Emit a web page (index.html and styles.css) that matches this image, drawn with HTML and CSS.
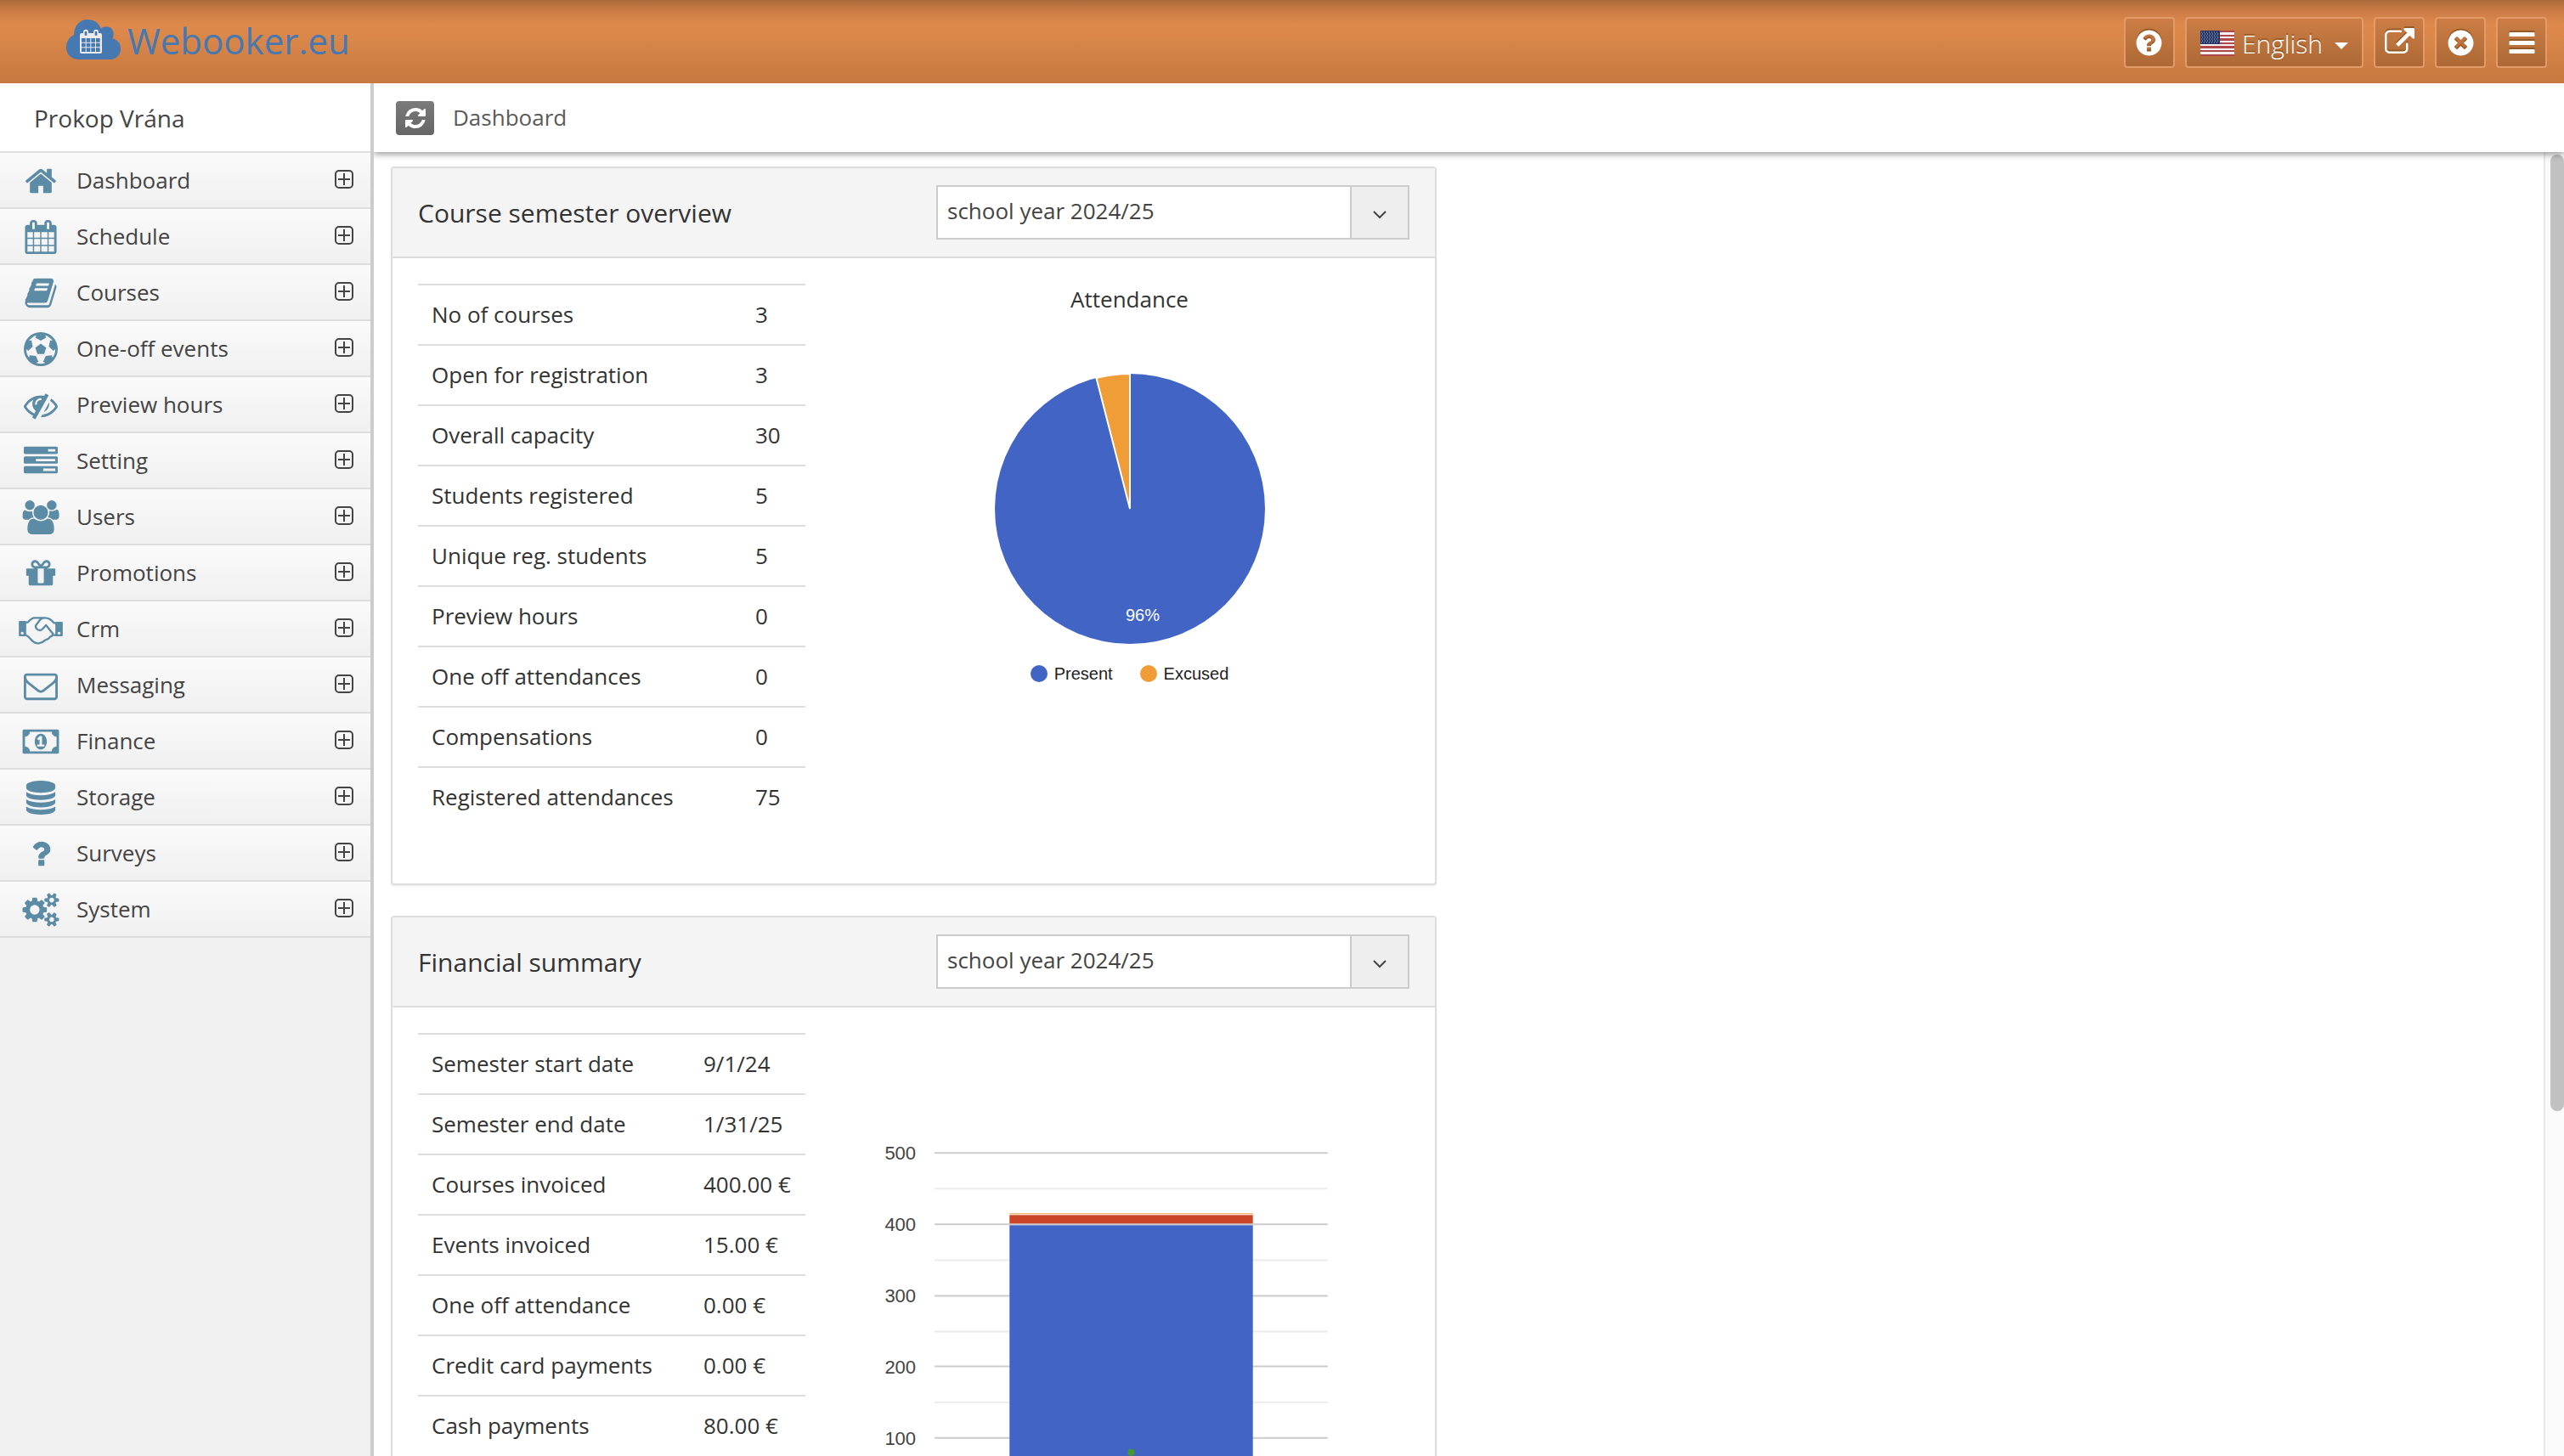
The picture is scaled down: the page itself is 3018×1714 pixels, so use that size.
FILE: index.html
```html
<!DOCTYPE html>
<html lang="en">
<head>
<meta charset="utf-8">
<title>Webooker.eu - Dashboard</title>
<link rel="stylesheet" href="styles.css">
</head>
<body>
<svg class="sprite" aria-hidden="true">
  <symbol id="plus" viewBox="0 0 22 22"><rect x="1" y="1" width="20" height="20" rx="4" fill="none" stroke="currentColor" stroke-width="2"/><path d="M4 11h14M11 4v14" stroke="currentColor" stroke-width="2"/></symbol>
</svg>
<header class="topbar">
  <a class="brand" href="#">
    <svg class="brand-logo" viewBox="24 24 192 141" aria-hidden="true">
      <path fill="#4678b1" d="M68 165C42 165 24 147 24 122C24 102 35 86 51 79C51 47 71 24 99 24C123 24 141 38 146 56C152 51 158 49 167 49C181 49 191 60 191 75C191 82 190 87 186 91C204 94 216 108 216 127C216 149 201 165 178 165Z"/>
      <path fill="#ebebeb" d="M78 72h6v-4a9 9 0 0 1 18 0v4h18v-4a9 9 0 0 1 18 0v4h6q6 0 6 6v60q0 6-6 6H78q-6 0-6-6V78q0-6 6-6z"/>
      <path fill="#4678b1" d="M89 69a4 4 0 0 1 8 0v11h-8zM125 69a4 4 0 0 1 8 0v11h-8zM78 90h14v14H78zM95 90h14v14H95zM112 90h14v14h-14zM129 90h14v14h-14zM78 107h14v14H78zM95 107h14v14H95zM112 107h14v14h-14zM129 107h14v14h-14zM78 124h14v14H78zM95 124h14v14H95zM112 124h14v14h-14zM129 124h14v14h-14z"/>
    </svg>
    <span>Webooker.eu</span>
  </a>
  <div class="tools">
    <button class="tool" type="button" aria-label="Help"><svg viewBox="0 0 1792 1792"><path d="M1024 1376v-192q0-14-9-23t-23-9h-192q-14 0-23 9t-9 23v192q0 14 9 23t23 9h192q14 0 23-9t9-23zm256-672q0-88-55.500-163t-138.500-116-170-41q-243 0-371 213-15 24 8 42l132 100q7 6 19 6 16 0 25-12 53-68 86-92 34-24 86-24 48 0 85.500 26t37.500 59q0 38-20 61t-68 45q-63 28-115.500 86.500t-52.500 125.500v36q0 14 9 23t23 9h192q14 0 23-9t9-23q0-19 21.500-49.500t54.500-49.500q32-18 49-28.500t46-35 44.500-48 28-60.500 12.500-81zm384 192q0 209-103 385.500t-279.500 279.500-385.500 103-385.500-103-279.500-279.500-103-385.500 103-385.500 279.500-279.500 385.500-103 385.500 103 279.500 279.500 103 385.500z"/></svg></button>
    <button class="tool language" type="button">
      <svg class="flag" viewBox="0 0 40 30" aria-hidden="true">
        <rect width="40" height="30" fill="#f4f1f0"/>
        <path fill="#b2474b" d="M0 0h40v2H0zM0 5h40v2H0zM0 9h40v3H0zM0 14h40v2H0zM0 18h40v3H0zM0 23h40v2H0zM0 28h40v2H0z"/>
        <rect width="23" height="16" fill="#263767"/>
        <path stroke="#a9b6cf" stroke-width="1" stroke-dasharray="1 2" d="M1 2h21M2 4h20M1 6h21M2 8h20M1 10h21M2 12h20M1 14h21"/>
      </svg>
      <span>English</span>
      <svg class="caret" viewBox="0 0 16 8" aria-hidden="true"><path d="M0 0h16l-8 8z"/></svg>
    </button>
    <button class="tool" type="button" aria-label="Open in new window"><svg viewBox="0 0 1792 1792"><path d="M1408 928v320q0 119-84.500 203.500t-203.500 84.500h-832q-119 0-203.500-84.500t-84.500-203.500v-832q0-119 84.500-203.500t203.500-84.500h704q14 0 23 9t9 23v64q0 14-9 23t-23 9h-704q-66 0-113 47t-47 113v832q0 66 47 113t113 47h832q66 0 113-47t47-113v-320q0-14 9-23t23-9h64q14 0 23 9t9 23zm384-864v512q0 26-19 45t-45 19-45-19l-176-176-652 652q-10 10-23 10t-23-10l-114-114q-10-10-10-23t10-23l652-652-176-176q-19-19-19-45t19-45 45-19h512q26 0 45 19t19 45z"/></svg></button>
    <button class="tool" type="button" aria-label="Close"><svg viewBox="0 0 1792 1792"><path d="M1277 1122q0-26-19-45l-181-181 181-181q19-19 19-45 0-27-19-46l-90-90q-19-19-46-19-26 0-45 19l-181 181-181-181q-19-19-45-19-27 0-46 19l-90 90q-19 19-19 46 0 26 19 45l181 181-181 181q-19 19-19 45 0 27 19 46l90 90q19 19 46 19 26 0 45-19l181-181 181 181q19 19 45 19 27 0 46-19l90-90q19-19 19-46zm387-226q0 209-103 385.500t-279.500 279.500-385.500 103-385.500-103-279.500-279.500-103-385.500 103-385.500 279.500-279.500 385.500-103 385.500 103 279.500 279.500 103 385.500z"/></svg></button>
    <button class="tool" type="button" aria-label="Menu"><svg viewBox="0 0 1792 1792"><path d="M1664 1344v128q0 26-19 45t-45 19h-1408q-26 0-45-19t-19-45v-128q0-26 19-45t45-19h1408q26 0 45 19t19 45zm0-512v128q0 26-19 45t-45 19h-1408q-26 0-45-19t-19-45v-128q0-26 19-45t45-19h1408q26 0 45 19t19 45zm0-512v128q0 26-19 45t-45 19h-1408q-26 0-45-19t-19-45v-128q0-26 19-45t45-19h1408q26 0 45 19t19 45z"/></svg></button>
  </div>
</header>
<div class="shell">
  <aside class="sidebar">
    <div class="user">Prokop Vrána</div>
    <nav class="menu" aria-label="Main">
      <a href="#"><svg class="icon" viewBox="0 0 1792 1792"><path d="M1472 992v480q0 26-19 45t-45 19h-384v-384h-256v384h-384q-26 0-45-19t-19-45v-480q0-1 .5-3t.5-3l575-474 575 474q1 2 1 6zm223-69l-62 74q-8 9-21 11h-3q-13 0-21-7l-692-577-692 577q-12 8-24 7-13-2-21-11l-62-74q-8-10-7-23.500t11-21.500l719-599q32-26 76-26t76 26l244 204v-195q0-14 9-23t23-9h192q14 0 23 9t9 23v408l219 182q10 8 11 21.500t-7 23.500z"/></svg><span>Dashboard</span><svg class="plus"><use href="#plus"/></svg></a>
      <a href="#"><svg class="icon" viewBox="0 0 1792 1792"><path d="M192 1664h288v-288h-288v288zm352 0h320v-288h-320v288zm-352-352h288v-320h-288v320zm352 0h320v-320h-320v320zm-352-384h288v-288h-288v288zm736 736h320v-288h-320v288zm-384-736h320v-288h-320v288zm768 736h288v-288h-288v288zm-384-352h320v-320h-320v320zm-352-864v-288q0-13-9.500-22.500t-22.500-9.500h-64q-13 0-22.500 9.500t-9.500 22.500v288q0 13 9.500 22.500t22.500 9.500h64q13 0 22.500-9.500t9.500-22.500zm736 864h288v-320h-288v320zm-384-384h320v-288h-320v288zm384 0h288v-288h-288v288zm32-480v-288q0-13-9.500-22.500t-22.500-9.500h-64q-13 0-22.500 9.500t-9.500 22.500v288q0 13 9.500 22.500t22.500 9.500h64q13 0 22.500-9.500t9.500-22.500zm384-64v1280q0 52-38 90t-90 38h-1408q-52 0-90-38t-38-90v-1280q0-52 38-90t90-38h128v-96q0-66 47-113t113-47h64q66 0 113 47t47 113v96h384v-96q0-66 47-113t113-47h64q66 0 113 47t47 113v96h128q52 0 90 38t38 90z"/></svg><span>Schedule</span><svg class="plus"><use href="#plus"/></svg></a>
      <a href="#"><svg class="icon" viewBox="0 0 1792 1792"><path d="M1703 478q40 57 18 129l-275 906q-19 64-76.500 107.500t-122.500 43.500h-923q-77 0-148.500-53.500t-99.500-131.500q-24-67-2-127 0-4 3-27t4-37q1-8-3-21.500t-3-19.500q2-11 8-21t16.500-23.500 16.500-23.500q23-38 45-91.500t30-91.500q3-10 .5-30t-.5-28q3-11 17-28t17-23q21-36 42-92t25-90q1-9-2.500-32t.5-28q4-13 22-30.500t22-22.500q19-26 42.500-84.500t27.500-96.500q1-8-3-25.500t-2-26.500q2-8 9-18t18-23 17-21q8-12 16.500-30.500t15-35 16-36 19.500-32 26.500-23.500 36-11.500 47.500 5.500l-1 3q38-9 51-9h761q74 0 114 56t18 130l-274 906q-36 119-71.500 153.500t-128.500 34.500h-869q-27 0-38 15-11 16-1 43 24 70 144 70h923q29 0 56-15.500t35-41.500l300-987q7-22 5-57 38 15 59 43zm-1064 2q-4 13 2 22.500t20 9.500h608q13 0 25.500-9.500t16.500-22.500l21-64q4-13-2-22.500t-20-9.500h-608q-13 0-25.500 9.500t-16.500 22.500zm-83 256q-4 13 2 22.500t20 9.500h608q13 0 25.500-9.500t16.500-22.500l21-64q4-13-2-22.500t-20-9.500h-608q-13 0-25.500 9.500t-16.500 22.500z"/></svg><span>Courses</span><svg class="plus"><use href="#plus"/></svg></a>
      <a href="#"><svg class="icon" viewBox="0 0 1792 1792"><path d="M609 816l287-208 287 208-109 336h-355zm287-816q182 0 348 71t286 191 191 286 71 348-71 348-191 286-286 191-348 71-348-71-286-191-191-286-71-348 71-348 191-286 286-191 348-71zm619 1350q149-203 149-454v-3l-102 89-240-224 63-323 134 12q-150-206-389-282l53 124-287 159-287-159 53-124q-239 76-389 282l135-12 62 323-240 224-102-89v3q0 251 149 454l30-132 326 40 139 298-116 69q117 39 240 39t240-39l-116-69 139-298 326-40z"/></svg><span>One-off events</span><svg class="plus"><use href="#plus"/></svg></a>
      <a href="#"><svg class="icon" viewBox="0 0 1792 1792"><path d="M555 1335l78-141q-87-63-136-159t-49-203q0-121 61-225-229 117-381 353 167 258 427 375zm389-759q0-20-14-34t-34-14q-125 0-214.500 89.500t-89.500 214.500q0 20 14 34t34 14 34-14 14-34q0-86 61-147t147-61q20 0 34-14t14-34zm363-191q0 7-1 9-106 189-316 567t-315 566l-49 89q-10 16-28 16-12 0-134-70-16-10-16-28 0-12 44-87-143-65-263.500-173t-208.500-245q-20-31-20-69t20-69q153-235 380-371t496-136q89 0 180 17l54-97q10-16 28-16 5 0 18 6t31 15.500 33 18.500 31.500 18.500 19.500 11.500q16 10 16 27zm37 447q0 139-79 253.500t-209 164.500l280-502q8 45 8 84zm448 128q0 35-20 69-39 64-109 145-150 172-347.500 267t-419.500 95l74-132q212-18 392.500-137t301.500-307q-115-179-282-294l63-112q95 64 182.500 153t144.500 184q20 34 20 69z"/></svg><span>Preview hours</span><svg class="plus"><use href="#plus"/></svg></a>
      <a href="#"><svg class="icon" viewBox="0 0 1792 1792"><path d="M1024 1408h640v-128h-640v128zm-384-512h1024v-128h-1024v128zm640-512h384v-128h-384v128zm512 832v256q0 26-19 45t-45 19h-1664q-26 0-45-19t-19-45v-256q0-26 19-45t45-19h1664q26 0 45 19t19 45zm0-512v256q0 26-19 45t-45 19h-1664q-26 0-45-19t-19-45v-256q0-26 19-45t45-19h1664q26 0 45 19t19 45zm0-512v256q0 26-19 45t-45 19h-1664q-26 0-45-19t-19-45v-256q0-26 19-45t45-19h1664q26 0 45 19t19 45z"/></svg><span>Setting</span><svg class="plus"><use href="#plus"/></svg></a>
      <a href="#"><svg class="icon" viewBox="64 0 1920 1792"><path d="M657 896q-162 5-265 128h-134q-82 0-138-40.500t-56-118.500q0-353 124-353 6 0 43.500 21t97.500 42.500 119 21.500q67 0 133-23-5 37-5 66 0 159 93 287zm1071 637q0 120-73 189.500t-194 69.500h-874q-121 0-194-69.500t-73-189.500q0-53 3.500-103.500t14-109 26.500-108.500 43-97.500 62-81 85.500-53.500 111.500-20q10 0 43 21.500t73 48 107 48 135 21.500 135-21.500 107-48 73-48 43-21.500q61 0 111.500 20t85.500 53.500 62 81 43 97.500 26.500 108.500 14 109 3.500 103.500zm-1024-1277q0 106-75 181t-181 75-181-75-75-181 75-181 181-75 181 75 75 181zm704 384q0 159-112.500 271.500t-271.500 112.500-271.500-112.500-112.500-271.500 112.500-271.500 271.500-112.500 271.500 112.500 112.500 271.500zm576 225q0 78-56 118.500t-138 40.500h-134q-103-123-265-128 93-128 93-287 0-29-5-66 66 23 133 23 59 0 119-21.500t97.500-42.500 43.500-21q124 0 124 353zm-128-609q0 106-75 181t-181 75-181-75-75-181 75-181 181-75 181 75 75 181z"/></svg><span>Users</span><svg class="plus"><use href="#plus"/></svg></a>
      <a href="#"><svg class="icon" viewBox="0 0 1792 1792"><path d="M1056 1356v-716h-320v716q0 25 18 38.500t46 13.500h192q28 0 46-13.500t18-38.500zm-456-844h195l-126-161q-26-31-69-31-40 0-68 28t-28 68 28 68 68 28zm688-96q0-40-28-68t-68-28q-43 0-69 31l-125 161h194q40 0 68-28t28-68zm376 256v320q0 14-9 23t-23 9h-96v416q0 40-28 68t-68 28h-1088q-40 0-68-28t-28-68v-416h-96q-14 0-23-9t-9-23v-320q0-14 9-23t23-9h440q-93 0-158.500-65.500t-65.500-158.500 65.500-158.500 158.500-65.500q107 0 168 77l128 165 128-165q61-77 168-77 93 0 158.500 65.500t65.500 158.500-65.500 158.500-158.500 65.500h440q14 0 23 9t9 23z"/></svg><span>Promotions</span><svg class="plus"><use href="#plus"/></svg></a>
      <a href="#"><svg class="icon" viewBox="66 693 155 120"><path fill-rule="evenodd" d="M66 726q0-3 3-3h23v54H69q-3 0-3-3zM78 761a5 5 0 1 0 .1 0zM221 729q0-3-3-3h-23v51h23q3 0 3-3zM208 761a5 5 0 1 0 .1 0z"/><path fill="none" stroke="currentColor" stroke-width="7" stroke-linejoin="round" d="M90 728h8C104 720 110 712 122 712h38C172 712 182 720 190 730h8M90 773C98 774 106 786 114 794C122 801 128 803 136 802C146 800 154 796 160 790C168 788 174 784 176 779C182 778 186 774 187 769L162 738L150 751C145 758 134 757 129 751C124 745 124 741 128 736L142 718Q147 712 156 712M186 773h12"/></svg><span>Crm</span><svg class="plus"><use href="#plus"/></svg></a>
      <a href="#"><svg class="icon" viewBox="0 0 1792 1792"><path d="M1664 1504v-768q-32 36-69 66-268 206-426 338-51 43-83 67t-86.500 48.500-102.500 24.500h-2q-48 0-102.500-24.500t-86.500-48.500-83-67q-158-132-426-338-37-30-69-66v768q0 13 9.500 22.500t22.500 9.500h1472q13 0 22.500-9.500t9.500-22.500zm0-1051v-24.500l-.5-13-3-12.500-5.500-9-9-7.500-14-2.500h-1472q-13 0-22.500 9.500t-9.500 22.500q0 168 147 284 193 152 401 317 6 5 35 29.500t46 37.500 44.500 31.500 50.500 27.500 43 9h2q20 0 43-9t50.500-27.500 44.500-31.500 46-37.500 35-29.500q208-165 401-317 54-43 100.500-115.500t46.500-131.500zm128-37v1088q0 66-47 113t-113 47h-1472q-66 0-113-47t-47-113v-1088q0-66 47-113t113-47h1472q66 0 113 47t47 113z"/></svg><span>Messaging</span><svg class="plus"><use href="#plus"/></svg></a>
      <a href="#"><svg class="icon" viewBox="0 0 1920 1792"><path d="M768 1152h384v-96h-128v-448h-114l-148 137 77 80q42-37 55-57h2v288h-128v96zm512-256q0 70-21 142t-59.500 134-101.500 101-138 39-138-39-101.500-101-59.500-134-21-142 21-142 59.500-134 101.500-101 138-39 138 39 101.500 101 59.500 134 21 142zm512 256v-512q-106 0-181-75t-75-181h-1152q0 106-75 181t-181 75v512q106 0 181 75t75 181h1152q0-106 75-181t181-75zm128-832v1152q0 26-19 45t-45 19h-1792q-26 0-45-19t-19-45v-1152q0-26 19-45t45-19h1792q26 0 45 19t19 45z"/></svg><span>Finance</span><svg class="plus"><use href="#plus"/></svg></a>
      <a href="#"><svg class="icon" viewBox="0 0 1792 1792"><path d="M896 768q237 0 443-43t325-127v170q0 69-103 128t-280 93.500-385 34.500-385-34.500-280-93.500-103-128v-170q119 84 325 127t443 43zm0 768q237 0 443-43t325-127v170q0 69-103 128t-280 93.500-385 34.500-385-34.500-280-93.500-103-128v-170q119 84 325 127t443 43zm0-384q237 0 443-43t325-127v170q0 69-103 128t-280 93.500-385 34.500-385-34.500-280-93.500-103-128v-170q119 84 325 127t443 43zm0-1152q208 0 385 34.500t280 93.500 103 128v128q0 69-103 128t-280 93.500-385 34.500-385-34.500-280-93.500-103-128v-128q0-69 103-128t280-93.500 385-34.500z"/></svg><span>Storage</span><svg class="plus"><use href="#plus"/></svg></a>
      <a href="#"><svg class="icon" viewBox="0 0 1792 1792"><path d="M1088 1256v240q0 16-12 28t-28 12h-240q-16 0-28-12t-12-28v-240q0-16 12-28t28-12h240q16 0 28 12t12 28zm316-600q0 54-15.500 101t-35 76.500-55 59.500-57.500 43.500-61 35.500q-41 23-68.500 65t-27.500 67q0 17-12 32.500t-28 15.500h-240q-15 0-25.500-18.500t-10.500-37.500v-45q0-83 65-156.500t143-108.500q59-27 84-56t25-76q0-42-46.500-74t-107.500-32q-65 0-108 29-35 25-107 115-13 16-31 16-12 0-25-8l-164-125q-13-10-15.500-25t5.500-28q160-266 464-266 80 0 161 31t146 83 106 127.500 41 158.500z"/></svg><span>Surveys</span><svg class="plus"><use href="#plus"/></svg></a>
      <a href="#"><svg class="icon" viewBox="-64 0 1920 1792"><path d="M832 896q0-106-75-181t-181-75-181 75-75 181 75 181 181 75 181-75 75-181zm768 512q0-52-38-90t-90-38-90 38-38 90q0 53 37.500 90.500t90.500 37.500 90.500-37.500 37.500-90.500zm0-1024q0-52-38-90t-90-38-90 38-38 90q0 53 37.500 90.500t90.500 37.500 90.500-37.500 37.500-90.500zm-384 421v185q0 10-7 19.500t-16 10.500l-155 24q-11 35-32 76 34 48 90 115 7 11 7 20 0 12-7 19-23 30-82.500 89.500t-78.500 59.500q-11 0-21-7l-115-90q-37 19-77 31-11 108-23 155-7 24-30 24h-186q-11 0-20-7.500t-10-17.500l-23-153q-34-10-75-31l-118 89q-7 7-20 7-11 0-21-8-144-133-144-160 0-9 7-19 10-14 41-53t47-61q-23-44-35-82l-152-24q-10-1-17-9.500t-7-19.500v-185q0-10 7-19.500t16-10.500l155-24q11-35 32-76-34-48-90-115-7-11-7-20 0-12 7-20 22-30 82-89t79-59q11 0 21 7l115 90q34-18 77-32 11-108 23-154 7-24 30-24h186q11 0 20 7.500t10 17.500l23 153q34 10 75 31l118-89q8-7 20-7 11 0 21 8 144 133 144 160 0 8-7 19-12 16-42 54t-45 60q23 48 34 82l152 23q10 2 17 10.500t7 19.500zm640 533v140q0 16-149 31-12 27-30 52 51 113 51 138 0 4-4 7-122 71-124 71-8 0-46-47t-52-68q-20 2-30 2t-30-2q-14 21-52 68t-46 47q-2 0-124-71-4-3-4-7 0-25 51-138-18-25-30-52-149-15-149-31v-140q0-16 149-31 13-29 30-52-51-113-51-138 0-4 4-7 4-2 35-20t59-34 30-16q8 0 46 46.500t52 67.500q20-2 30-2t30 2q51-71 92-112l6-2q4 0 124 70 4 3 4 7 0 25-51 138 17 23 30 52 149 15 149 31zm0-1024v140q0 16-149 31-12 27-30 52 51 113 51 138 0 4-4 7-122 71-124 71-8 0-46-47t-52-68q-20 2-30 2t-30-2q-14 21-52 68t-46 47q-2 0-124-71-4-3-4-7 0-25 51-138-18-25-30-52-149-15-149-31v-140q0-16 149-31 13-29 30-52-51-113-51-138 0-4 4-7 4-2 35-20t59-34 30-16q8 0 46 46.500t52 67.500q20-2 30-2t30 2q51-71 92-112l6-2q4 0 124 70 4 3 4 7 0 25-51 138 17 23 30 52 149 15 149 31z"/></svg><span>System</span><svg class="plus"><use href="#plus"/></svg></a>
    </nav>
  </aside>
  <main class="main">
    <div class="pagebar">
      <button class="refresh" type="button" aria-label="Refresh"><svg viewBox="0 0 1792 1792"><path d="M1639 1056q0 5-1 7-64 268-268 434.500t-478 166.500q-146 0-282.500-55t-243.500-157l-129 129q-19 19-45 19t-45-19-19-45v-448q0-26 19-45t45-19h448q26 0 45 19t19 45-19 45l-137 137q71 66 161 102t187 36q134 0 250-65t186-179q11-17 53-117 8-23 30-23h192q13 0 22.500 9.500t9.500 22.500zm25-800v448q0 26-19 45t-45 19h-448q-26 0-45-19t-19-45 19-45l138-138q-148-137-349-137-134 0-250 65t-186 179q-11 17-53 117-8 23-30 23h-199q-13 0-22.500-9.500t-9.500-22.500v-7q65-268 270-434.500t480-166.500q146 0 284 55.500t245 156.500l130-129q19-19 45-19t45 19 19 45z"/></svg></button>
      <h1>Dashboard</h1>
    </div>
    <div class="viewport">
      <div class="content">
        <div class="column">
          <section class="panel">
            <div class="panel-head">
              <h2>Course semester overview</h2>
              <div class="combo">
                <select aria-label="Course semester"><option>school year 2024/25</option></select>
                <span class="combo-arrow"><svg viewBox="0 0 16 10" aria-hidden="true"><path d="M1 1l7 7 7-7"/></svg></span>
              </div>
            </div>
            <div class="panel-body">
              <table class="stats">
                <tbody>
                  <tr><th scope="row">No of courses</th><td>3</td></tr>
                  <tr><th scope="row">Open for registration</th><td>3</td></tr>
                  <tr><th scope="row">Overall capacity</th><td>30</td></tr>
                  <tr><th scope="row">Students registered</th><td>5</td></tr>
                  <tr><th scope="row">Unique reg. students</th><td>5</td></tr>
                  <tr><th scope="row">Preview hours</th><td>0</td></tr>
                  <tr><th scope="row">One off attendances</th><td>0</td></tr>
                  <tr><th scope="row">Compensations</th><td>0</td></tr>
                  <tr><th scope="row">Registered attendances</th><td>75</td></tr>
                </tbody>
              </table>
              <figure class="chart">
                <figcaption>Attendance</figcaption>
                <svg class="pie" viewBox="0 0 320 320" role="img" aria-label="Attendance pie chart">
                  <circle cx="160" cy="160" r="159" fill="#4265c5"/>
                  <path fill="#f09d38" stroke="#fff" stroke-width="2" d="M160 160L120.500 6A159 159 0 0 1 160 1z"/>
                  <text x="175" y="292" text-anchor="middle" fill="#fff">96%</text>
                </svg>
                <ul class="legend">
                  <li class="present">Present</li>
                  <li class="excused">Excused</li>
                </ul>
              </figure>
            </div>
          </section>
          <section class="panel">
            <div class="panel-head">
              <h2>Financial summary</h2>
              <div class="combo">
                <select aria-label="Financial period"><option>school year 2024/25</option></select>
                <span class="combo-arrow"><svg viewBox="0 0 16 10" aria-hidden="true"><path d="M1 1l7 7 7-7"/></svg></span>
              </div>
            </div>
            <div class="panel-body">
              <table class="stats money">
                <tbody>
                  <tr><th scope="row">Semester start date</th><td>9/1/24</td></tr>
                  <tr><th scope="row">Semester end date</th><td>1/31/25</td></tr>
                  <tr><th scope="row">Courses invoiced</th><td>400.00 €</td></tr>
                  <tr><th scope="row">Events invoiced</th><td>15.00 €</td></tr>
                  <tr><th scope="row">One off attendance</th><td>0.00 €</td></tr>
                  <tr><th scope="row">Credit card payments</th><td>0.00 €</td></tr>
                  <tr><th scope="row">Cash payments</th><td>80.00 €</td></tr>
                </tbody>
              </table>
              <figure class="chart">
                <svg class="bars" viewBox="0 1 658 640" role="img" aria-label="Financial bar chart">
                  <path stroke="#ebebeb" stroke-width="2" d="M100 184h462M100 268h462M100 352h462M100 435h462M100 519h462"/>
                  <path stroke="#ccc" stroke-width="2" d="M100 142h462M100 226h462M100 310h462M100 393h462M100 477h462M100 560h462"/>
                  <rect x="188" y="213" width="286" height="1" fill="#f09d38"/>
                  <rect x="188" y="215" width="286" height="10" fill="#cb4628"/>
                  <rect x="188" y="227" width="286" height="333" fill="#4265c5"/>
                  <circle cx="331" cy="494" r="4" fill="#449a2b"/>
                  <g text-anchor="end" fill="#444">
                    <text x="78" y="150">500</text>
                    <text x="78" y="234">400</text>
                    <text x="78" y="318">300</text>
                    <text x="78" y="401">200</text>
                    <text x="78" y="485">100</text>
                  </g>
                </svg>
              </figure>
            </div>
          </section>
        </div>
      </div>
      <div class="scrollbar"><div class="thumb"></div></div>
    </div>
  </main>
</div>
</body>
</html>
```
FILE: styles.css
```css
* {
  box-sizing: border-box;
}

body {
  margin: 0;
  height: 100vh;
  overflow: hidden;
  display: flex;
  flex-direction: column;
  background: #fff;
  color: #333;
  font: 26px/37px "Open Sans", "Noto Sans", sans-serif;
}

.sprite {
  display: none;
}

button {
  font: inherit;
}

/* Top bar */
.topbar {
  flex: none;
  display: flex;
  justify-content: space-between;
  align-items: center;
  height: 98px;
  padding: 2px 20px 0 78px;
  background: linear-gradient(#aa693a, #cd7d46 14px, #df8a4c 30px, #c67840);
}

.brand {
  display: flex;
  align-items: center;
  gap: 8px;
  padding-bottom: 4px;
  color: #4678b1;
  font-size: 42px;
  line-height: 60px;
  text-decoration: none;
}

.brand-logo {
  width: 64px;
  height: 47px;
  margin-bottom: 4px;
}

.tools {
  display: flex;
  gap: 12px;
}

.tool {
  display: flex;
  align-items: center;
  justify-content: center;
  width: 60px;
  height: 60px;
  padding: 0;
  border: 2px solid #e29a66;
  border-radius: 4px;
  background: linear-gradient(#cc7d45, #ad6936);
  color: #fff;
  text-shadow: 0 -2px 0 #965a25;
}

.tool svg {
  width: 35px;
  height: 35px;
  fill: currentColor;
  filter: drop-shadow(0 -2px 0 #965a25);
}

.tool.language {
  justify-content: flex-start;
  width: auto;
  padding: 2px 16px 0;
  font-size: 30px;
  font-weight: 300;
}

.tool .flag {
  width: 40px;
  height: 30px;
  margin-right: 9px;
  filter: none;
}

.tool .caret {
  width: 16px;
  height: 8px;
  margin: 6px 0 0 14px;
  filter: none;
}

/* Shell */
.shell {
  flex: 1;
  min-height: 0;
  display: flex;
}

.sidebar {
  flex: none;
  width: 440px;
  border-right: 4px solid #ccc;
  background: #f1f1f1;
}

.user {
  height: 82px;
  padding-left: 40px;
  border-bottom: 2px solid #e0e0e0;
  background: #fff;
  color: #444;
  font-size: 28px;
  line-height: 82px;
}

.menu a {
  display: flex;
  align-items: center;
  height: 66px;
  padding: 0 20px;
  border-bottom: 2px solid #ddd;
  background: linear-gradient(#fafafa, #f0f0f0);
  color: #444;
  text-decoration: none;
}

.menu span {
  flex: 1;
  margin-left: 14px;
}

.icon {
  width: 56px;
  height: 40px;
  margin-top: 2px;
  fill: #5c8ba5;
  color: #5c8ba5;
}

.plus {
  width: 22px;
  height: 22px;
  margin-bottom: 2px;
}

.main {
  flex: 1;
  min-width: 0;
  display: flex;
  flex-direction: column;
}

.pagebar {
  position: relative;
  flex: none;
  display: flex;
  align-items: center;
  gap: 22px;
  height: 81px;
  padding-left: 26px;
  background: #fff;
  box-shadow: 0 2px 8px rgba(0, 0, 0, .45);
  clip-path: inset(0 0 -20px 0);
}

.pagebar h1 {
  margin: 0;
  color: #5a5a5a;
  font-size: 26px;
  font-weight: 400;
}

.refresh {
  display: flex;
  align-items: center;
  justify-content: center;
  width: 45px;
  height: 40px;
  padding: 0;
  border: 0;
  border-radius: 4px;
  background: linear-gradient(#7b7b7b, #666);
}

.refresh svg {
  width: 28px;
  height: 28px;
  fill: #fff;
}

.viewport {
  flex: 1;
  min-height: 0;
  display: flex;
}

.content {
  flex: 1;
  display: grid;
  grid-template-columns: 1fr 1fr;
  gap: 52px;
  padding: 17px 20px 0;
  overflow: hidden;
}

.column {
  display: flex;
  flex-direction: column;
  gap: 36px;
}

.scrollbar {
  flex: none;
  width: 24px;
  padding: 3px 0 0 6px;
  border-left: 2px solid #e8e8e8;
  background: #fafafa;
}

.thumb {
  height: 73.5%;
  border-radius: 8px;
  background: #c1c1c1;
}

/* Panels */
.panel {
  flex: none;
  border: 2px solid #ddd;
  border-radius: 4px;
  background: #fff;
  box-shadow: 0 2px 2px rgba(0, 0, 0, .05);
}

.panel-head {
  display: flex;
  justify-content: space-between;
  align-items: center;
  padding: 20px 30px;
  border-bottom: 2px solid #ddd;
  background: #f4f4f4;
}

.panel-head h2 {
  margin: 0;
  font-size: 30px;
  font-weight: 400;
}

.combo {
  display: flex;
  width: 557px;
  height: 64px;
  border: 2px solid #ccc;
  background: #fff;
}

.combo select {
  flex: 1;
  appearance: none;
  padding: 0 11px 4px;
  border: 0;
  background: #fff;
  color: #444;
  font: inherit;
}

.combo-arrow {
  display: flex;
  align-items: center;
  justify-content: center;
  width: 68px;
  padding-top: 6px;
  border-left: 2px solid #ccc;
  background: #eee;
  pointer-events: none;
}

.combo-arrow svg {
  width: 16px;
  height: 10px;
  fill: none;
  stroke: #444;
  stroke-width: 2;
}

.panel-body {
  display: flex;
  align-items: flex-start;
  gap: 52px;
  padding: 30px;
}

.stats {
  flex: none;
  width: 456px;
  margin-bottom: 37px;
  border-spacing: 0;
  table-layout: fixed;
}

.stats th,
.stats td {
  padding: 16px;
  border-top: 2px solid #ddd;
  font-weight: 400;
  text-align: left;
  white-space: nowrap;
}

.stats td {
  width: 75px;
}

.stats.money td {
  width: 136px;
}

.chart {
  flex: 1;
  min-width: 0;
  margin: 0;
  display: flex;
  flex-direction: column;
  align-items: center;
}

.chart text,
.legend {
  font-family: "Liberation Sans", Arial, sans-serif;
}

.pie {
  width: 320px;
  height: 320px;
  margin: 68px 0 20px;
  font-size: 20px;
}

.bars {
  width: 100%;
  font-size: 22px;
}

.legend {
  display: flex;
  gap: 32px;
  margin: 0;
  padding: 0;
  list-style: none;
  color: #222;
  font-size: 20px;
  line-height: 28px;
}

.legend li {
  display: flex;
  align-items: center;
  gap: 8px;
}

.legend li::before {
  content: "";
  width: 20px;
  height: 20px;
  border-radius: 50%;
  background: #4265c5;
}

.legend .excused::before {
  background: #f09d38;
}
```
